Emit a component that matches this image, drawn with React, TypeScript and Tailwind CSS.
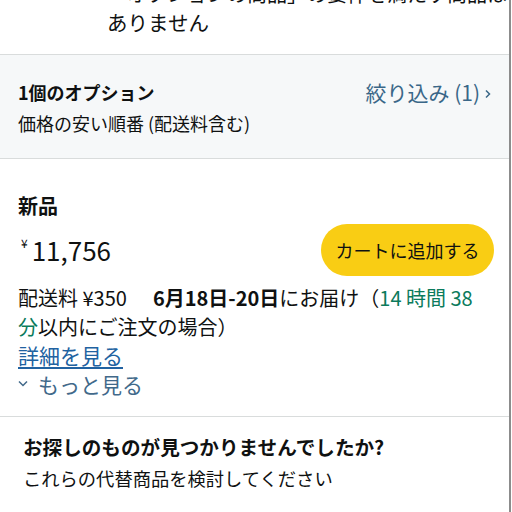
import React from "react";

const font = { fontFamily: '"Noto Sans CJK JP", "Noto Sans", sans-serif' };

export default function App() {
  return (
    <div
      className="w-[511px] h-[512px] overflow-hidden bg-white border-r-2 border-[#8c8c8c] text-[#0f1111]"
      style={font}
    >
      {/* top remnant */}
      <div className="h-[54px] overflow-hidden pl-[107px] pr-[18px]">
        <p className="-mt-[20px] text-[20px] leading-[28px] whitespace-nowrap">
          「オプションの商品」の要件を満たす商品は
          <br />
          <span className="text-[20.5px]">ありません</span>
        </p>
      </div>

      {/* options */}
      <div className="border-t border-b border-[#d9dcdc] bg-[#f6f8f9] pl-[18px] pr-[18px] pt-[24px] pb-[22px] flex justify-between">
        <div className="flex flex-col gap-[5px]">
          <div className="text-[18px] leading-[26px] font-bold">1個のオプション</div>
          <div className="text-[18px] leading-[26px]">価格の安い順番 (配送料含む)</div>
        </div>
        <div className="flex items-center h-[32px] mt-[-2px] text-[21px] text-[#3a6788] gap-[5px]">
          <span>絞り込み (1)</span>
          <svg width="6" height="10" viewBox="0 0 6 10" className="mt-[2px]">
            <path d="M1 1.5 L4.5 5 L1 8.5" fill="none" stroke="#3a6788" strokeWidth="1.5" />
          </svg>
        </div>
      </div>

      {/* new item */}
      <div className="pl-[18px] pr-[17px] pt-[33px] pb-[17px] border-b border-[#d9dcdc]">
        <div className="text-[20px] leading-[28px] font-bold">新品</div>
        <div className="mt-[4px] flex items-center justify-between h-[52px]">
          <div className="flex items-start pl-[3px]">
            <span className="text-[12px] leading-[12px] mt-[2px]">¥</span>
            <span className="text-[26px] leading-[30px] ml-[4px]">11,756</span>
          </div>
          <button className="h-[52px] w-[173px] mr-[-2px] rounded-full bg-[#f9cd14] text-[18px] text-[#0f1111]">
            カートに追加する
          </button>
        </div>
        <div className="mt-[7px] text-[20px] leading-[29px]">
          <span>配送料 ¥350</span>
          <span className="ml-[26px] font-bold">6月18日-20日</span>
          <span>にお届け（</span>
          <span className="text-[#0b7b5c]">14 時間 38</span>
          <br />
          <span className="text-[#0b7b5c]">分</span>
          <span>以内にご注文の場合）</span>
        </div>
        <div className="text-[21px] leading-[29px]">
          <a className="text-[#2162a1] underline underline-offset-[3px]">詳細を見る</a>
        </div>
        <div className="text-[21px] leading-[29px] text-[#41698a] flex items-center">
          <svg width="10" height="7" viewBox="0 0 10 7" className="mr-[10px] mt-[-2px]">
            <path d="M1 1.5 L5 5.5 L9 1.5" fill="none" stroke="#41698a" strokeWidth="1.5" />
          </svg>
          <span>もっと見る</span>
        </div>
      </div>

      {/* alternatives */}
      <div className="pl-[23px] pr-[18px] pt-[16px]">
        <div className="text-[19.6px] leading-[28px] font-bold">お探しのものが見つかりませんでしたか?</div>
        <div className="mt-[3px] text-[18.3px] leading-[28px]">これらの代替商品を検討してください</div>
      </div>
    </div>
  );
}
